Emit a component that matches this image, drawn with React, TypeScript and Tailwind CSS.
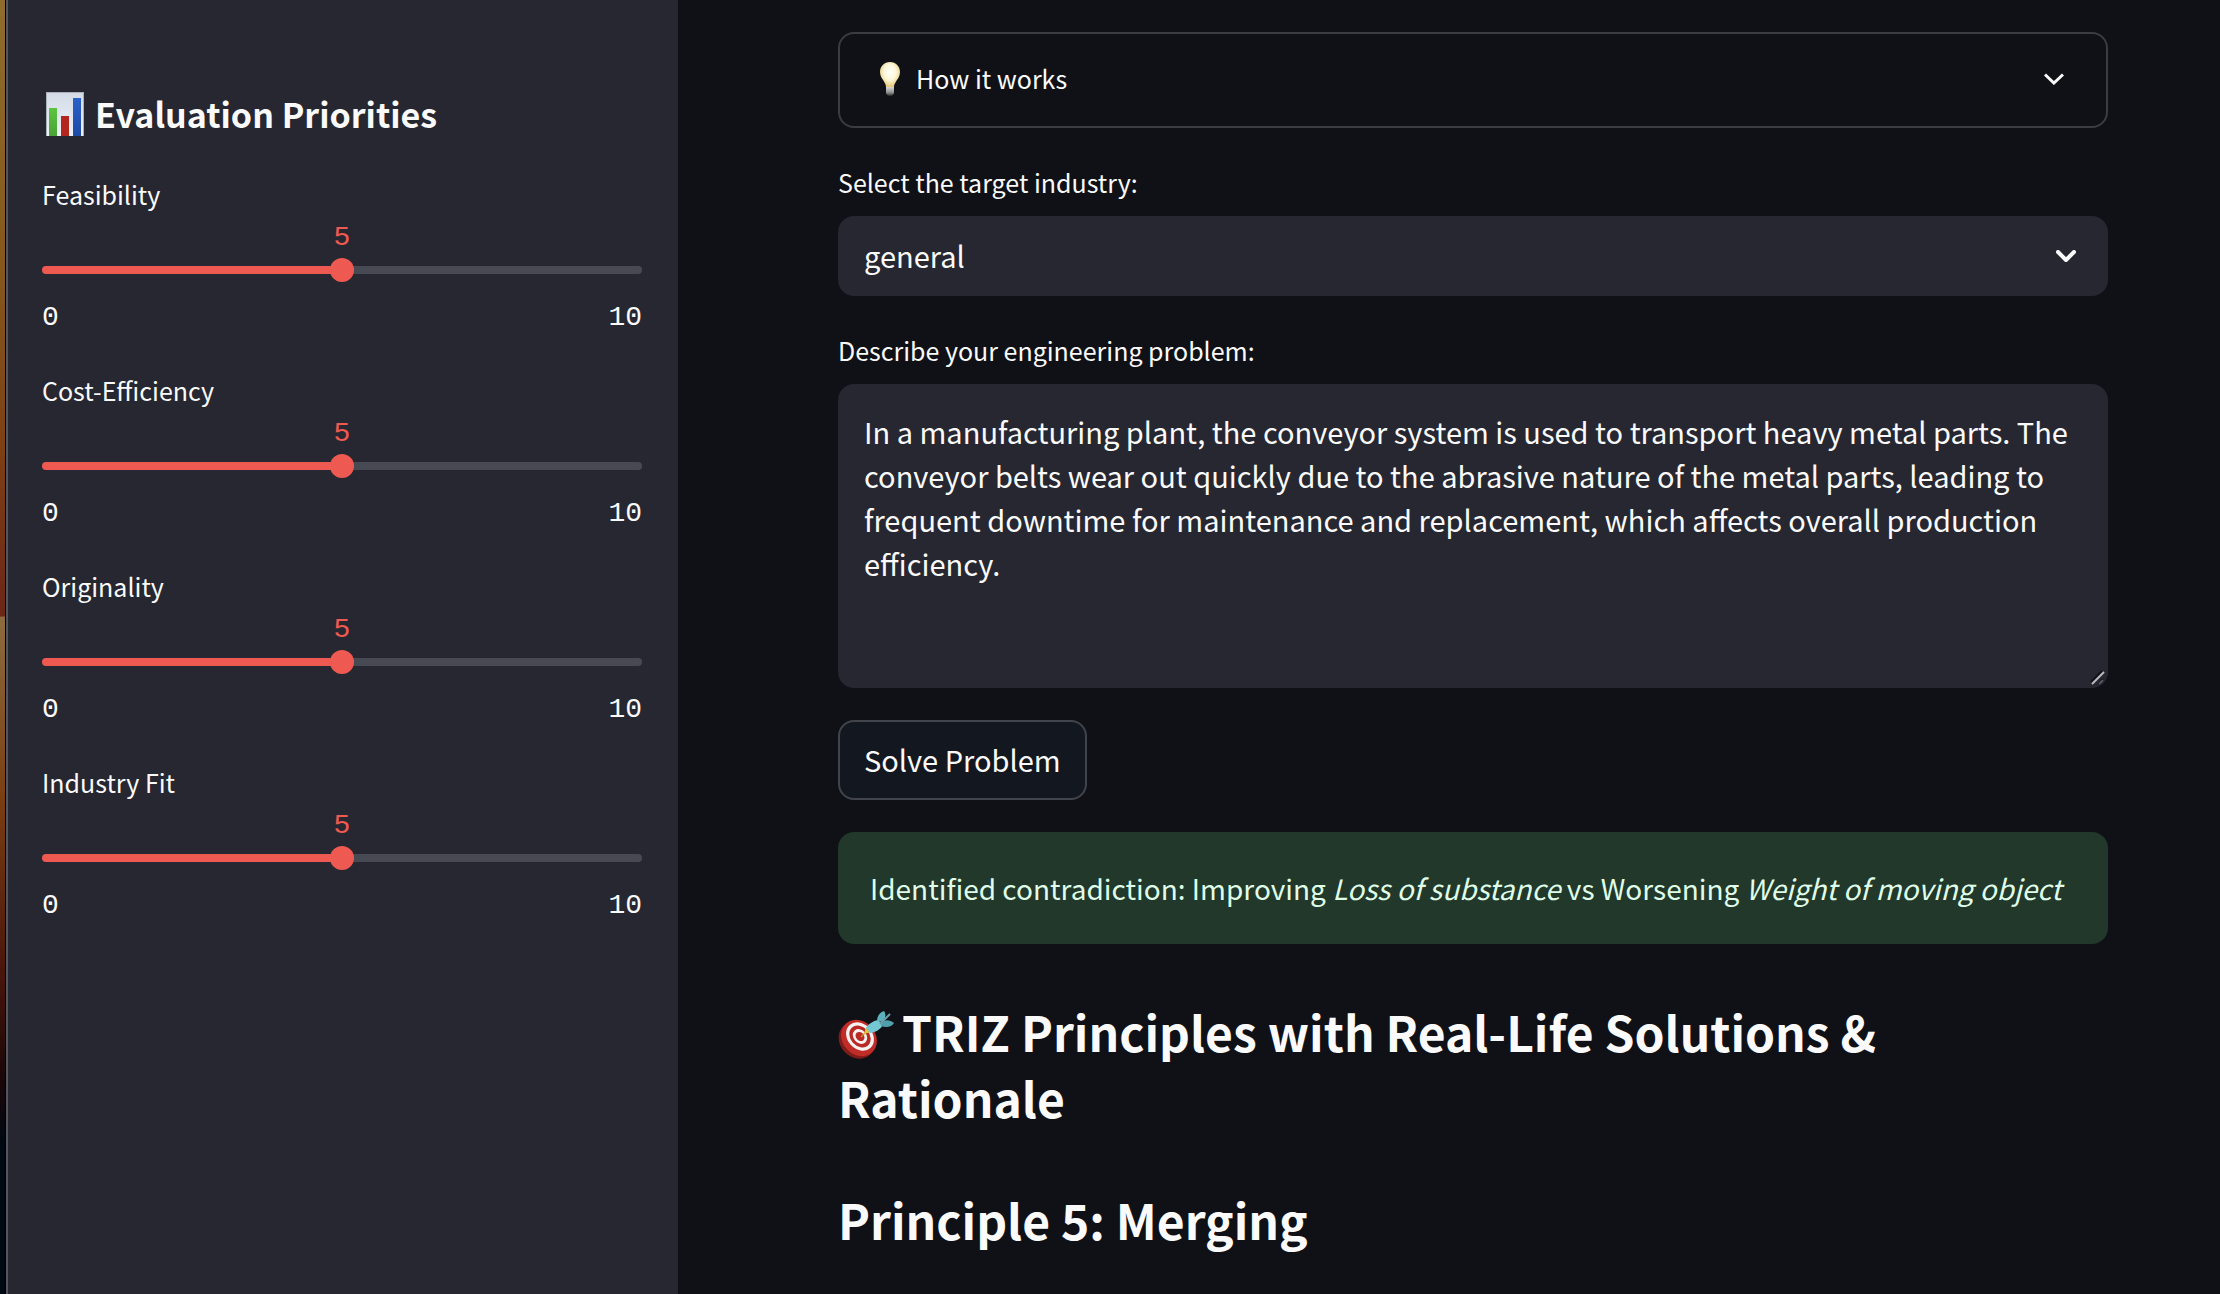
import { useState, type CSSProperties } from "react";

function BarChartIcon() {
  return (
    <svg viewBox="0 0 40 44" className="ml-[3px] h-11 w-10 shrink-0" aria-hidden="true">
      <defs>
        <linearGradient id="paper" x1="0" y1="0" x2="0" y2="1">
          <stop offset="0" stopColor="#d3dbe6" />
          <stop offset="1" stopColor="#eef2f8" />
        </linearGradient>
        <linearGradient id="barGreen" x1="0" y1="0" x2="0" y2="1">
          <stop offset="0" stopColor="#5cc43f" />
          <stop offset="1" stopColor="#4aa336" />
        </linearGradient>
        <linearGradient id="barBlue" x1="0" y1="0" x2="0" y2="1">
          <stop offset="0" stopColor="#2a62c9" />
          <stop offset="1" stopColor="#1f4ba6" />
        </linearGradient>
      </defs>
      <rect x="1" y="0" width="38" height="44" fill="#a9b0bb" />
      <rect x="2" y="1" width="36" height="43" fill="url(#paper)" />
      <rect x="4" y="16" width="8" height="28" fill="url(#barGreen)" />
      <rect x="16" y="24" width="8" height="20" fill="#b2261b" />
      <rect x="28" y="6" width="8" height="38" fill="url(#barBlue)" />
    </svg>
  );
}

function BulbIcon() {
  return (
    <svg viewBox="0 0 20 34" className="h-[34px] w-5 shrink-0" aria-hidden="true">
      <defs>
        <radialGradient id="glass" cx="0.5" cy="0.4" r="0.62">
          <stop offset="0" stopColor="#fffffa" />
          <stop offset="0.5" stopColor="#fdf6d8" />
          <stop offset="1" stopColor="#dfc067" />
        </radialGradient>
        <linearGradient id="socket" x1="0" y1="0" x2="0" y2="1">
          <stop offset="0" stopColor="#d8d8d8" />
          <stop offset="0.6" stopColor="#8f8f8f" />
          <stop offset="1" stopColor="#2d2d2d" />
        </linearGradient>
      </defs>
      <path
        d="M10 0 C4 0 0 4.5 0 10 C0 14 2 16.500 4 19.500 C5.500 21.800 6 23.500 6 25.500 L14 25.500 C14 23.500 14.500 21.800 16 19.500 C18 16.500 20 14 20 10 C20 4.5 16 0 10 0 Z"
        fill="url(#glass)"
      />
      <path d="M6 25 L14 25 L14 30.500 C14 32.500 12 34 10 34 C8 34 6 32.500 6 30.500 Z" fill="url(#socket)" />
    </svg>
  );
}

function TargetIcon() {
  return (
    <svg viewBox="0 0 56 48" className="mr-2 -mt-2 inline-block h-12 w-14 align-middle" aria-hidden="true">
      <ellipse cx="18.500" cy="29.500" rx="16.500" ry="19.500" fill="#7e1c19" transform="rotate(-42 18.500 29.500)" />
      <ellipse cx="21" cy="27" rx="16.500" ry="19.500" fill="#c02c27" transform="rotate(-42 21 27)" />
      <ellipse cx="22" cy="25.500" rx="12.500" ry="15.500" fill="#f5f2f1" transform="rotate(-42 22 25.500)" />
      <ellipse cx="22" cy="25.500" rx="9.500" ry="12" fill="#b92a25" transform="rotate(-42 22 25.500)" />
      <ellipse cx="22" cy="25.500" rx="6.500" ry="8" fill="#f5f2f1" transform="rotate(-42 22 25.500)" />
      <ellipse cx="22" cy="25.500" rx="4" ry="5" fill="#b92a25" transform="rotate(-42 22 25.500)" />
      <path d="M23 26 L30 19" stroke="#c9962b" strokeWidth="1.500" />
      <path d="M26 23 L28 16 L33 21 Z" fill="#dfc43c" />
      <path d="M28 17 C30 13 35 10 40 9 L45 14 C42 19 37 21.500 32 22 Z" fill="#74c8d3" />
      <path d="M39 10 C39 5 42 1 46 0 C48 3 48 7 45 11 Z" fill="#5db0bd" />
      <path d="M43 12 C47 8 52 9 56 12 C54 16 48 17 43 15 Z" fill="#4f9fad" />
      <path d="M42 13 L52 3" stroke="#6d9da6" strokeWidth="2" />
    </svg>
  );
}

function Chevron({ round = false }: { round?: boolean }) {
  return (
    <svg viewBox="0 0 20 12" className="h-3 w-5 shrink-0" fill="none" aria-hidden="true">
      <path
        d={round ? "M2 2 10 10 18 2" : "M1 1.500 9.900 10 19 1.500"}
        stroke="#fafafa"
        strokeWidth={round ? 4 : 3}
        strokeLinecap={round ? "round" : "butt"}
        strokeLinejoin={round ? "round" : "miter"}
      />
    </svg>
  );
}

function PrioritySlider({ id, label }: { id: string; label: string }) {
  const [value, setValue] = useState(5);
  const fill = `${value * 10}%`;
  return (
    <div className="flex flex-col">
      <label htmlFor={id} className="text-[25px] leading-10">
        {label}
      </label>
      <div className="mt-2 flex h-8 font-['Liberation_Mono',monospace] text-[28px] leading-8 text-[#ee5a52]">
        <output htmlFor={id} className="ml-(--fill) -translate-x-1/2" style={{ "--fill": fill } as CSSProperties}>
          {value}
        </output>
      </div>
      <input
        id={id}
        type="range"
        min={0}
        max={10}
        value={value}
        onChange={(e) => setValue(Number(e.target.value))}
        style={{ "--fill": fill } as CSSProperties}
        className="mt-1 h-6 w-full cursor-pointer appearance-none bg-transparent [&::-webkit-slider-runnable-track]:h-2 [&::-webkit-slider-runnable-track]:rounded-full [&::-webkit-slider-runnable-track]:bg-[linear-gradient(to_right,#ee5a52_var(--fill),#484a53_var(--fill))] [&::-webkit-slider-thumb]:-mt-2 [&::-webkit-slider-thumb]:size-6 [&::-webkit-slider-thumb]:appearance-none [&::-webkit-slider-thumb]:rounded-full [&::-webkit-slider-thumb]:bg-[#ee5a52]"
      />
      <div className="mt-5 flex justify-between font-['Liberation_Mono',monospace] text-[28px] leading-8">
        <span>0</span>
        <span>10</span>
      </div>
    </div>
  );
}

const priorities = [
  { id: "feasibility", label: "Feasibility" },
  { id: "cost", label: "Cost-Efficiency" },
  { id: "originality", label: "Originality" },
  { id: "fit", label: "Industry Fit" },
];

const defaultProblem =
  "In a manufacturing plant, the conveyor system is used to transport heavy metal parts. The conveyor belts wear out quickly due to the abrasive nature of the metal parts, leading to frequent downtime for maintenance and replacement, which affects overall production efficiency.";

export default function App() {
  const [problem, setProblem] = useState(defaultProblem);
  return (
    <div className="flex min-h-screen bg-[#0f1116] font-['Noto_Sans_CJK_SC',sans-serif] text-[#fafafa]">
      <div className="w-1.5 shrink-0 border-r border-black bg-[linear-gradient(to_bottom,#8f6d2c_0%,#84561c_22%,#7d3f14_35%,#6c2618_47.600%,#8c6c3e_47.700%,#7a3d12_62%,#4a160c_75%,#1c0708_83%,#020812_88%)]" />
      <aside className="w-[672px] shrink-0 border-l-2 border-[#55565d] bg-[#262730] pr-9 pl-[34px] pt-[90px]">
        <h2 className="flex items-center gap-2.5 text-[34px] leading-[48px] font-bold">
          <BarChartIcon />
          Evaluation Priorities
        </h2>
        <div className="mt-9 flex flex-col gap-9">
          {priorities.map((p) => (
            <PrioritySlider key={p.id} id={p.id} label={p.label} />
          ))}
        </div>
      </aside>
      <main className="flex min-w-0 flex-1 flex-col pt-8 pr-28 pl-40">
        <button
          type="button"
          className="flex h-24 items-center gap-4 rounded-2xl border-2 border-[#3b3c40] pr-[42px] pb-0.5 pl-10 text-[25px]"
        >
          <BulbIcon />
          <span className="flex-1 text-left">How it works</span>
          <Chevron />
        </button>

        <label htmlFor="industry" className="mt-[34px] text-[25px] leading-10">
          Select the target industry:
        </label>
        <div className="relative mt-3.5">
          <select
            id="industry"
            defaultValue="general"
            className="h-20 w-full appearance-none rounded-2xl bg-[#262730] px-[26px] text-[29px]"
          >
            <option value="general">general</option>
          </select>
          <div className="pointer-events-none absolute inset-y-0 right-8 flex items-center">
            <Chevron round />
          </div>
        </div>

        <label htmlFor="problem" className="mt-[34px] text-[25px] leading-10">
          Describe your engineering problem:
        </label>
        <div className="relative mt-3.5">
          <textarea
            id="problem"
            value={problem}
            onChange={(e) => setProblem(e.target.value)}
            className="block h-[304px] w-full resize-none rounded-2xl bg-[#262730] px-[26px] py-[25px] text-[29px] leading-[44px]"
          />
          <svg viewBox="0 0 16 16" className="pointer-events-none absolute right-0.5 bottom-0.5 size-4" fill="none" aria-hidden="true">
            <path d="M1 12 12 1M8 14 13 9" stroke="#111216" strokeWidth="2" />
            <path d="M2 14 14 2" stroke="#b9babd" strokeWidth="2" />
            <path d="M9 14 13 10" stroke="#55565c" strokeWidth="2" />
          </svg>
        </div>

        <button
          type="button"
          className="mt-8 h-20 self-start rounded-2xl border-2 border-[#42444c] bg-[#131720] px-6 text-[29px]"
        >
          Solve Problem
        </button>

        <div role="alert" className="mt-8 rounded-2xl bg-[#22382a] px-8 py-8 text-[28px] leading-[48px] text-[#dffde9]">
          Identified contradiction: Improving <em>Loss of substance</em> vs Worsening <em>Weight of moving object</em>
        </div>

        <h2 className="mt-[54px] text-[48px] leading-[66px] font-bold">
          <TargetIcon />
          TRIZ Principles with Real-Life Solutions &amp; Rationale
        </h2>
        <h2 className="mt-14 text-[48px] leading-[66px] font-bold">Principle 5: Merging</h2>
      </main>
    </div>
  );
}
